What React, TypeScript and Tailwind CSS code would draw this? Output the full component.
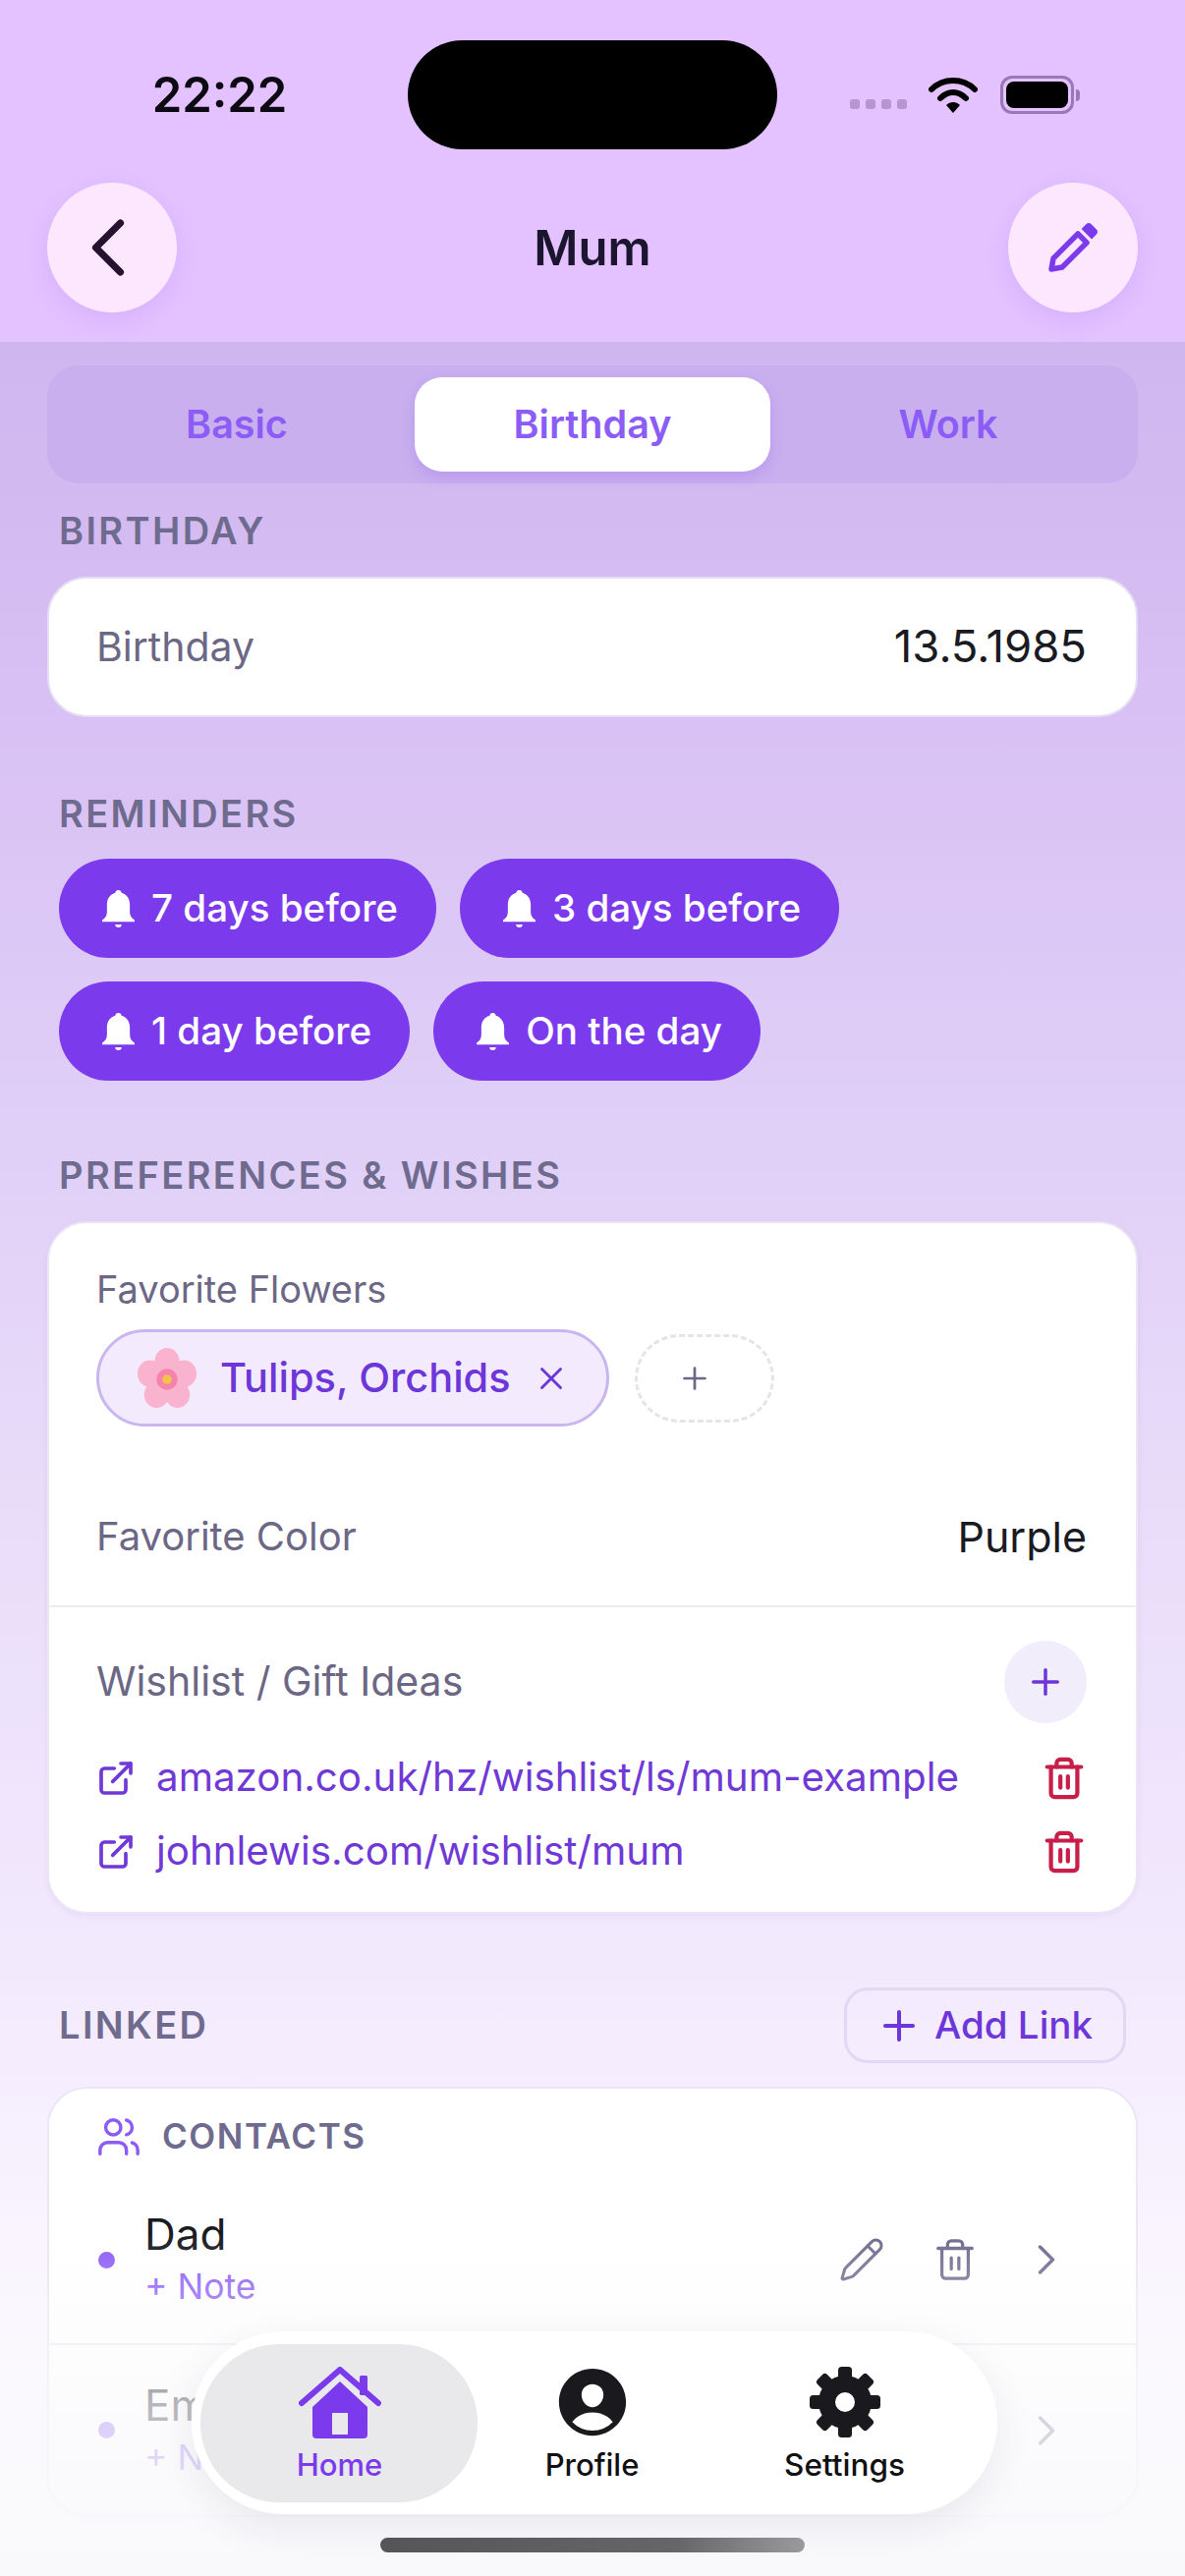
import { ChevronLeft, ChevronRight, ExternalLink, Pencil, Plus, Trash2, Users, X } from "lucide-react";
import { IoPersonCircle } from "react-icons/io5";

const SectionLabel = ({ children }: { children: React.ReactNode }) => (
  <h2 className="px-3 h-12 flex items-center text-[38px] font-semibold tracking-[0.063em] uppercase text-[#6f6b8f]">
    {children}
  </h2>
);

const Reminder = ({ label }: { label: string }) => (
  <div className="flex items-center gap-[17px] h-[101px] pl-[44px] pr-[39px] rounded-full bg-[#7c3aed] text-white text-[38.6px] font-medium">
    <svg viewBox="3.5 1.5 17 21.2" preserveAspectRatio="none" className="w-[33px] h-[38px]" fill="white">
      <path d="M12 1.5c-1 0-1.6.7-1.6 1.6C7.5 4 6 6.5 6 10v4c0 2-1 3.5-2.5 4.5v1h17v-1C19 17.5 18 16 18 14v-4c0-3.5-1.5-6-4.4-6.9 0-.9-.6-1.6-1.6-1.6Z" />
      <path d="M10.3 21h3.4a1.7 1.7 0 0 1-3.4 0Z" />
    </svg>
    <span>{label}</span>
  </div>
);

const WishLink = ({ url }: { url: string }) => (
  <div className="flex items-center h-[75px]">
    <ExternalLink className="w-[40px] h-[40px] text-[#7038d6] shrink-0" strokeWidth={2.2} />
    <span className="ml-[21px] text-[40.3px] text-[#7038d6]">{url}</span>
    <Trash2 className="ml-auto w-[46px] h-[46px] text-[#c81e4a]" strokeWidth={2.2} />
  </div>
);

const Flower = () => (
  <svg viewBox="0 0 64 64" className="w-[62px] h-[62px] shrink-0">
    <g fill="#f9b3ce">
      <ellipse cx="32" cy="14" rx="13" ry="14" />
      <ellipse cx="50" cy="27" rx="13" ry="14" />
      <ellipse cx="43" cy="49" rx="13" ry="14" />
      <ellipse cx="21" cy="49" rx="13" ry="14" />
      <ellipse cx="14" cy="27" rx="13" ry="14" />
    </g>
    <circle cx="32" cy="33" r="11" fill="#f583ac" />
    <circle cx="32" cy="33" r="5" fill="#f2c14e" />
  </svg>
);

const ContactRow = ({ name, className }: { name: string; className: string }) => (
  <div className={`flex items-center pl-[50px] pr-[65px] ${className}`}>
    <div className="w-[17px] h-[17px] rounded-full bg-[#8b5cf6]" />
    <div className="ml-[30px] flex flex-col">
      <span className="text-[44px] leading-[56px] text-[#1a1a22]">{name}</span>
      <span className="text-[35.5px] leading-[52px] text-[#8b5cf6]">+ Note</span>
    </div>
    <Pencil className="ml-auto w-[48px] h-[48px] text-[#6f6b8f]" strokeWidth={1.5} />
    <Trash2 className="ml-[48px] w-[46px] h-[46px] text-[#6f6b8f]" strokeWidth={1.7} />
    <ChevronRight className="ml-[44px] w-[52px] h-[52px] text-[#6f6b8f]" strokeWidth={1.6} />
  </div>
);

const HomeIcon = () => (
  <svg viewBox="0 0 84 74" className="w-[84px] h-[74px]" fill="#7c3aed">
    <path d="M42 15 L70 41 V69 a4 4 0 0 1-4 4 H18 a4 4 0 0 1-4-4 V41 Z M34 47 V69 H50 V47 Z" fillRule="evenodd" />
    <path d="M3 37 L42 3 L81 37" fill="none" stroke="#7c3aed" strokeWidth="6" strokeLinecap="round" strokeLinejoin="round" />
    <rect x="62" y="9" width="8" height="20" rx="1.5" />
  </svg>
);

const GearIcon = () => (
  <svg viewBox="0 0 72 72" className="w-[72px] h-[72px]" fill="#1a1a1e">
    <circle cx="36" cy="36" r="18.5" fill="none" stroke="#1a1a1e" strokeWidth="17" />
    <rect x="29" y="0" width="14" height="14" rx="3.5" />
    <rect x="29" y="0" width="14" height="14" rx="3.5" transform="rotate(45 36 36)" />
    <rect x="29" y="0" width="14" height="14" rx="3.5" transform="rotate(90 36 36)" />
    <rect x="29" y="0" width="14" height="14" rx="3.5" transform="rotate(135 36 36)" />
    <rect x="29" y="0" width="14" height="14" rx="3.5" transform="rotate(180 36 36)" />
    <rect x="29" y="0" width="14" height="14" rx="3.5" transform="rotate(225 36 36)" />
    <rect x="29" y="0" width="14" height="14" rx="3.5" transform="rotate(270 36 36)" />
    <rect x="29" y="0" width="14" height="14" rx="3.5" transform="rotate(315 36 36)" />
  </svg>
);

export default function App() {
  return (
    <div className="relative w-[1206px] h-[2622px] overflow-hidden flex flex-col font-['Inter',sans-serif] bg-white">
      <header className="h-[348px] shrink-0 bg-[#e4c2ff]">
        <div className="flex items-start pt-[41px] h-[186px]">
          <div className="w-[415px] h-[111px] flex items-center justify-center pl-[32px]">
            <span className="text-[49px] font-semibold text-[#0c0a12]">22:22</span>
          </div>
          <div className="w-[376px] h-[111px] rounded-[56px] bg-black" />
          <div className="flex items-center pl-[74px] h-[111px]">
            <div className="flex gap-[6px] mt-[18px]">
              <span className="w-[10px] h-[10px] rounded-[3px] bg-[#b795cf]" />
              <span className="w-[10px] h-[10px] rounded-[3px] bg-[#b795cf]" />
              <span className="w-[10px] h-[10px] rounded-[3px] bg-[#b795cf]" />
              <span className="w-[10px] h-[10px] rounded-[3px] bg-[#b795cf]" />
            </div>
            <svg viewBox="0 0 50 38" className="ml-[22px] w-[50px] h-[38px]">
              <path d="M3 13 C15 1 35 1 47 13" fill="none" stroke="#000" strokeWidth="6" strokeLinecap="round" />
              <path d="M12 22 C20 14 30 14 38 22" fill="none" stroke="#000" strokeWidth="6" strokeLinecap="round" />
              <path d="M18 29 C22 25 28 25 32 29 L25 37 Z" fill="#000" />
            </svg>
            <div className="ml-[23px] w-[75px] h-[39px] rounded-[12px] border-[3px] border-[#9a78b4] p-[3px]">
              <div className="w-full h-full rounded-[8px] bg-black" />
            </div>
            <div className="ml-[2px] w-[4px] h-[12px] rounded-r-full bg-[#9a78b4]" />
          </div>
        </div>
        <div className="flex items-center justify-between px-12">
          <button className="w-[132px] h-[132px] rounded-full bg-[#fce7ff] flex items-center justify-center shadow-[0_8px_24px_rgba(124,58,237,0.12)]">
            <ChevronLeft className="w-[100px] h-[100px] text-[#26122f] -ml-[8px]" strokeWidth={1.7} />
          </button>
          <h1 className="mt-[2px] text-[49px] font-semibold text-[#1c1530]">Mum</h1>
          <button className="w-[132px] h-[132px] rounded-full bg-[#fce7ff] flex items-center justify-center shadow-[0_8px_24px_rgba(124,58,237,0.12)]">
            <svg viewBox="0 0 52 52" className="w-[52px] h-[52px]" fill="none" stroke="#7c3aed" strokeWidth="5.5">
              <path d="M4 48 L6 37 L31 12 L40 21 L15 46 Z" strokeLinejoin="round" />
              <path d="M36 7 L40 3 Q42 1 44 3 L49 8 Q51 10 49 12 L45 16 Z" fill="#7c3aed" strokeWidth="2" />
            </svg>
          </button>
        </div>
      </header>

      <main className="flex-1 px-12 pt-6 bg-[linear-gradient(180deg,#cfb6ef_0%,#d9c2f4_19%,#dfcef7_34%,#e8dcf9_51.5%,#f3e9fd_72.6%,#f9f4fe_85%,#fbfaff_100%)]">
        <div className="grid grid-cols-3 h-[120px] p-3 rounded-[32px] bg-[#c9afee]">
          <button className="pt-[2px] text-[39.5px] font-semibold text-[#8b5cf6]">Basic</button>
          <button className="pt-[2px] text-[39.5px] font-semibold text-[#8b5cf6] bg-white rounded-[28px] shadow-[0_6px_14px_rgba(124,58,237,0.18)]">
            Birthday
          </button>
          <button className="pt-[2px] text-[39.5px] font-semibold text-[#8b5cf6]">Work</button>
        </div>

        <div className="mt-6">
          <SectionLabel>Birthday</SectionLabel>
        </div>
        <div className="mt-[23px] h-[143px] flex items-center justify-between pl-[48px] pr-[50px] rounded-[40px] bg-white border-2 border-[#e6def5]">
          <span className="text-[41px] text-[#6b6785]">Birthday</span>
          <span className="text-[45.5px] text-[#1a1a22]">13.5.1985</span>
        </div>

        <div className="mt-[74px]">
          <SectionLabel>Reminders</SectionLabel>
        </div>
        <div className="mt-[22px] flex flex-wrap gap-x-6 gap-y-6 w-[900px] pl-3">
          <Reminder label="7 days before" />
          <Reminder label="3 days before" />
          <Reminder label="1 day before" />
          <Reminder label="On the day" />
        </div>

        <div className="mt-[72px]">
          <SectionLabel>Preferences &amp; Wishes</SectionLabel>
        </div>
        <div className="mt-[23px] h-[705px] rounded-[40px] bg-white border-2 border-[#ebe5f7] shadow-[0_2px_6px_rgba(60,40,110,0.06)]">
          <div className="h-[391px] pl-[48px] pr-[50px] pt-[42px] border-b-2 border-[#eeecf2]">
            <div className="text-[38px] leading-[50px] text-[#6b6785]">Favorite Flowers</div>
            <div className="mt-[16px] flex items-center gap-[26px]">
              <div className="flex items-center h-[99px] w-[522px] pl-[38px] rounded-full bg-[#f3ebfd] border-[3px] border-[#c9b6ee]">
                <Flower />
                <span className="ml-[23px] text-[41.5px] font-medium text-[#6d36d9]">Tulips, Orchids</span>
                <X className="ml-[22px] w-[38px] h-[38px] text-[#6d36d9]" strokeWidth={1.8} />
              </div>
              <div className="flex items-center justify-center w-[142px] h-[90px] rounded-full border-[3px] border-dashed border-[#e4e4ea]">
                <Plus className="w-[36px] h-[36px] text-[#6b6785] -ml-[20px]" strokeWidth={1.8} />
              </div>
            </div>
            <div className="mt-[82px] flex items-center justify-between h-[60px]">
              <span className="text-[40px] text-[#6b6785]">Favorite Color</span>
              <span className="text-[43px] text-[#1a1a22]">Purple</span>
            </div>
          </div>
          <div className="pl-[48px] pr-[50px]">
            <div className="mt-[34px] flex items-center justify-between h-[84px]">
              <span className="text-[41px] text-[#6b6785]">Wishlist / Gift Ideas</span>
              <div className="w-[84px] h-[84px] rounded-full bg-[#f1edfb] flex items-center justify-center">
                <Plus className="w-[42px] h-[42px] text-[#6d36d9]" strokeWidth={2} />
              </div>
            </div>
            <div className="mt-[18px]">
              <WishLink url="amazon.co.uk/hz/wishlist/ls/mum-example" />
              <WishLink url="johnlewis.com/wishlist/mum" />
            </div>
          </div>
        </div>

        <div className="mt-[75px] flex items-center justify-between pr-3">
          <SectionLabel>Linked</SectionLabel>
          <button className="flex items-center gap-[12px] h-[77px] w-[287px] pl-[29px] rounded-[24px] border-[3px] border-[#e2d8f3] text-[38.5px] font-medium text-[#6d36d9]">
            <Plus className="w-[48px] h-[48px]" strokeWidth={2} />
            Add Link
          </button>
        </div>

        <div className="mt-[24px] h-[438px] rounded-[40px] bg-white border-2 border-[#ebe5f7]">
          <div className="flex items-center gap-[21px] h-[97px] pl-[48px]">
            <Users className="w-[46px] h-[46px] text-[#8b5cf6]" strokeWidth={1.8} />
            <span className="text-[35px] font-semibold tracking-[0.045em] text-[#6f6b8f]">CONTACTS</span>
          </div>
          <ContactRow name="Dad" className="h-[164px] pb-[8px] border-b-2 border-[#eeecf2]" />
          <ContactRow name="Emma" className="h-[173px]" />
        </div>
      </main>

      <div className="absolute left-0 right-0 bottom-0 h-[350px] bg-[linear-gradient(180deg,rgba(250,250,252,0)_0%,rgba(250,250,252,0.7)_50%,rgba(249,249,251,0.85)_80%,#f9f9fb_100%)]" />

      <nav className="absolute left-[195px] top-[2373px] w-[820px] h-[186px] pl-[22px] grid grid-cols-[257px_257px_257px] rounded-[93px] bg-white shadow-[0_12px_40px_rgba(40,30,70,0.08)]">
        <div className="absolute left-[9px] top-[13px] w-[282px] h-[161px] rounded-[80px] bg-[#e9e8ea]" />
        <div className="relative flex flex-col items-center pt-[36px]">
          <HomeIcon />
          <span className="mt-[8px] leading-[36px] text-[31px] font-medium text-[#7c3aed]">Home</span>
        </div>
        <div className="relative flex flex-col items-center pt-[30px]">
          <IoPersonCircle className="w-[84px] h-[84px] text-[#1a1a1e]" />
          <span className="mt-[4px] leading-[36px] text-[31px] font-medium text-[#111114]">Profile</span>
        </div>
        <div className="relative flex flex-col items-center pt-[36px]">
          <GearIcon />
          <span className="mt-[10px] leading-[36px] text-[31.5px] font-medium text-[#111114]">Settings</span>
        </div>
      </nav>

      <div className="absolute left-[387px] top-[2583px] w-[432px] h-[15px] rounded-full bg-[linear-gradient(90deg,#555558_0%,#666668_70%,#9a9a9c_100%)]" />
    </div>
  );
}
